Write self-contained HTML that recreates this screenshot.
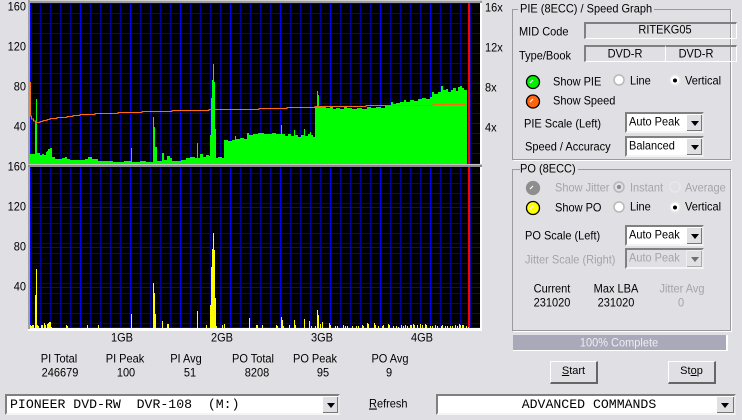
<!DOCTYPE html>
<html><head><meta charset="utf-8"><style>
html,body{margin:0;padding:0;width:742px;height:420px;overflow:hidden;background:#e0dfe3}
body{position:relative;font-family:"Liberation Sans",sans-serif;font-size:11px;color:#000}
svg{position:absolute;left:0;top:0}
.t{position:absolute;line-height:14px;white-space:nowrap;transform:scaleY(1.12)}
.c{transform:translateX(-50%) scaleY(1.12)}
.d{color:#a5a4a8}
.in{position:absolute;box-sizing:border-box;border:1px solid #fff;border-top-color:#808080;border-left-color:#808080;border-top-width:2px;border-left-width:2px;border-right-width:1px}
.cb{position:absolute;box-sizing:border-box;background:#fff;border:2px solid #808080;border-right-color:#e8e8e8;border-bottom-color:#f4f4f4}
.ar{position:absolute;right:0;top:0;bottom:0;width:16px;background:#e0dfe3;border-left:1px solid #fff;border-top:1px solid #fff;box-sizing:border-box;box-shadow:inset -1px -1px 0 #777}
.ar:after{content:"";position:absolute;left:4px;top:6px;border:4px solid transparent;border-top:5px solid #000;border-bottom:0}
.btn{position:absolute;box-sizing:border-box;width:48px;height:23px;background:#e0dfe3;border:1px solid #fff;border-right:2px solid #666;border-bottom:2px solid #666;text-align:center;line-height:19px}
.m{font-family:"Liberation Mono",monospace;font-size:13.2px;transform:none}
.m.c{transform:translateX(-50%)}
</style></head><body>
<svg width="742" height="420" viewBox="0 0 742 420" shape-rendering="crispEdges">
<defs><pattern id="g" x="30" y="3" width="10" height="10" patternUnits="userSpaceOnUse"><rect width="10" height="10" fill="#000"/><rect width="1" height="10" fill="#0000a8"/><rect width="10" height="1" fill="#0000a8"/></pattern></defs>
<rect x="28" y="0" width="454" height="331" fill="#fff"/>
<rect x="30" y="3" width="450" height="161" fill="url(#g)"/>
<rect x="30" y="167" width="450" height="161" fill="url(#g)"/>
<path d="M30.5 3V164M80.5 3V164M130.5 3V164M180.5 3V164M230.5 3V164M280.5 3V164M330.5 3V164M380.5 3V164M430.5 3V164M30.5 167V328M80.5 167V328M130.5 167V328M180.5 167V328M230.5 167V328M280.5 167V328M330.5 167V328M380.5 167V328M430.5 167V328" stroke="#0000f8" stroke-width="1" fill="none"/>
<path d="M30 43.5H480M30 83.5H480M30 123.5H480M30 207.5H480M30 247.5H480M30 287.5H480M30 327.5H480" stroke="#0000d0" stroke-width="1" fill="none"/>
<rect x="28" y="0" width="454" height="1" fill="#d0d0d0"/><rect x="28" y="1" width="454" height="2" fill="#9c9c9c"/>
<rect x="28" y="0" width="2" height="329" fill="#a0a0a0"/>
<path fill="#00ff00" d="M30 164V154H35V122H36V99H37V153H40V155H42V154H44V155H46V152H47V151H48V149H50V148H52V157H55V159H62V158H65V157H67V159H70V160H85V159H88V157H92V159H98V161H113V162H124V161H131V148H132V162H140V161H146V162H153V117H154V127H155V147H157V161H162V153H164V160H167V156H170V158H172V161H181V160H186V158H190V157H195V158H197V143H198V158H200V154H203V157H206V155H209V156H210V135H211V98H212V80H213V64H214V82H215V129H216V158H218V157H222V158H224V140H228V141H232V140H235V136H236V139H240V138H244V139H247V133H249V135H253V134H258V133H264V134H272V133H276V134H281V125H282V134H285V136H288V134H291V136H294V130H295V135H298V137H301V135H304V129H305V136H308V134H310V132H311V135H313V137H315V107H317V91H318V95H319V106H322V107H326V108H330V107H333V109H336V108H340V109H344V107H347V108H352V109H357V108H362V109H367V107H371V108H376V107H381V108H385V106H388V105H391V102H393V104H396V103H400V102H404V100H406V102H410V100H414V101H418V99H422V98H426V99H430V97H432V92H434V94H438V92H441V86H443V90H446V89H448V92H451V90H453V88H456V91H458V87H460V86H462V88H464V90H467V164Z"/>
<path fill="none" stroke="#ff6a10" stroke-width="1" d="M30.5 82V116H31.5V119H33.5V121H35.5V122.5H40V121.5H43V120.5H47V119.5H50V118.5H57V117.500H67V116.500H73V115.500H80V114.500H95V113.500H118V112.500H142V111.500H172V110.500H209V109.500H259V108.500H287V107.500H315V106.500H366V105.500H433V104.500H466"/>
<path fill="none" stroke="#ff0000" stroke-width="2" d="M469 3V164M469 167V328"/>
<path fill="none" stroke="#ffff00" stroke-width="1" d="M30.5 328V325M31.5 328V326M32.5 328V325M33.5 328V325M35.5 328V295M36.5 328V269M37.5 328V325M38.5 328V326M41.5 328V325M42.5 328V325M44.5 328V323M45.5 328V325M47.5 328V324M48.5 328V323M49.5 328V322M50.5 328V322M51.5 328V327M66.5 328V325M67.5 328V326M87.5 328V325M98.5 328V325M131.5 328V314M153.5 328V283M154.5 328V293M155.5 328V314M162.5 328V321M167.5 328V324M168.5 328V324M197.5 328V311M206.5 328V325M210.5 328V305M211.5 328V267M212.5 328V249M213.5 328V233M214.5 328V250M215.5 328V298M216.5 328V326M222.5 328V325M224.5 328V324M249.5 328V318M256.5 328V325M257.5 328V325M262.5 328V325M276.5 328V325M277.5 328V326M281.5 328V317M282.5 328V320M283.5 328V326M289.5 328V325M294.5 328V320M295.5 328V325M304.5 328V319M309.5 328V321M311.5 328V326M315.5 328V326M317.5 328V310M318.5 328V315M320.5 328V324M322.5 328V322M329.5 328V323M330.5 328V325M335.5 328V326M337.5 328V326M343.5 328V325M345.5 328V326M347.5 328V326M352.5 328V326M356.5 328V326M358.5 328V326M362.5 328V325M363.5 328V326M367.5 328V323M368.5 328V324M374.5 328V323M375.5 328V325M378.5 328V326M382.5 328V326M383.5 328V325M388.5 328V324M389.5 328V325M393.5 328V326M396.5 328V326M398.5 328V327M401.5 328V325M403.5 328V326M405.5 328V325M407.5 328V326M410.5 328V325M411.5 328V325M413.5 328V324M414.5 328V325M417.5 328V325M420.5 328V324M422.5 328V325M425.5 328V324M426.5 328V325M430.5 328V326M432.5 328V326M435.5 328V325M437.5 328V326M441.5 328V326M442.5 328V325M445.5 328V326M447.5 328V326M450.5 328V326M452.5 328V326M455.5 328V325M457.5 328V326M459.5 328V324M460.5 328V325M462.5 328V325M463.5 328V325M466.5 328V326M468.5 328V327"/>
<rect x="28" y="164" width="454" height="1" fill="#c4c4c4"/><rect x="28" y="165" width="454" height="2" fill="#8c8c8c"/>
<path fill="none" stroke="#9a9a9e" d="M518 9.5H512.5V159.5H730.5V9.5H647M521 169.5H512.5V330.5H730.5V169.5H574"/>
<path fill="none" stroke="#fff" d="M513.5 160.5H731.5V10M513.5 331.5H731.5V170"/>
<rect x="513" y="335" width="215" height="16" fill="#fff"/><rect x="513" y="335" width="213" height="15" fill="#a9a9b9"/>
<g shape-rendering="auto">
<circle cx="533" cy="82" r="6.5" fill="#00f000" stroke="#000" stroke-width="1.3"/><path d="M530 83L533 80" stroke="#fff" stroke-width="1.2"/>
<circle cx="533" cy="101.500" r="6.500" fill="#ff6410" stroke="#000" stroke-width="1.300"/><path d="M530 102L533 99" stroke="#fff" stroke-width="1.2"/>
<circle cx="533" cy="188" r="6.500" fill="#8e8e8e" stroke="#8e8e8e" stroke-width="1.300"/><path d="M530 189L533 186" stroke="#fff" stroke-width="1.2"/>
<circle cx="533" cy="208" r="6.500" fill="#ffff00" stroke="#000" stroke-width="1.300"/><path d="M530 209L533 206" stroke="#fff" stroke-width="1.2"/>
<circle cx="619" cy="80" r="5" fill="#fff" stroke="#b8b8b8" stroke-width="1.500"/>
<circle cx="675" cy="80" r="5" fill="#fff" stroke="#e8e8e8" stroke-width="1.500"/><circle cx="675" cy="80.500" r="2" fill="#000"/>
<circle cx="619" cy="187" r="5" fill="#e0dfe3" stroke="#b8b8b8" stroke-width="1.500"/><circle cx="619" cy="187" r="2" fill="#888"/>
<circle cx="675" cy="187" r="5" fill="#e0dfe3" stroke="#e8e8ea" stroke-width="1.500"/>
<circle cx="619" cy="207" r="5" fill="#fff" stroke="#b8b8b8" stroke-width="1.500"/>
<circle cx="675" cy="207" r="5" fill="#fff" stroke="#e8e8e8" stroke-width="1.500"/><circle cx="675" cy="207.500" r="2" fill="#000"/>
</g>
</svg>

<span class="t" style="right:716px;top:0">160</span><span class="t" style="right:716px;top:40px">120</span><span class="t" style="right:716px;top:80px">80</span><span class="t" style="right:716px;top:120px">40</span>
<span class="t" style="right:716px;top:160px">160</span><span class="t" style="right:716px;top:200px">120</span><span class="t" style="right:716px;top:240px">80</span><span class="t" style="right:716px;top:280px">40</span>
<span class="t" style="left:485px;top:1px">16x</span><span class="t" style="left:485px;top:41px">12x</span><span class="t" style="left:485px;top:81px">8x</span><span class="t" style="left:485px;top:121px">4x</span>

<span class="t c" style="left:122px;top:331px">1GB</span><span class="t c" style="left:222px;top:331px">2GB</span><span class="t c" style="left:322px;top:331px">3GB</span><span class="t c" style="left:422px;top:331px">4GB</span>
<span class="t c" style="left:59px;top:352px">PI Total</span><span class="t c" style="left:125px;top:352px">PI Peak</span><span class="t c" style="left:186px;top:352px">PI Avg</span><span class="t c" style="left:253px;top:352px">PO Total</span><span class="t c" style="left:315px;top:352px">PO Peak</span><span class="t c" style="left:390px;top:352px">PO Avg</span>
<span class="t c" style="left:60px;top:366px">246679</span><span class="t c" style="left:126px;top:366px">100</span><span class="t c" style="left:190px;top:366px">51</span><span class="t c" style="left:257px;top:366px">8208</span><span class="t c" style="left:323px;top:366px">95</span><span class="t c" style="left:389px;top:366px">9</span>

<span class="t" style="left:520px;top:2px;background:#e0dfe3;padding-right:2px">PIE (8ECC) / Speed Graph</span>
<span class="t" style="left:519px;top:25px">MID Code</span>
<div class="in" style="left:584px;top:22px;width:153px;height:17px"></div>
<span class="t c" style="left:665px;top:23px">RITEKG05</span>
<span class="t" style="left:519px;top:49px">Type/Book</span>
<div class="in" style="left:584px;top:45px;width:82px;height:17px"></div>
<div class="in" style="left:665px;top:45px;width:72px;height:17px;border-left:1px solid #fff"></div>
<span class="t c" style="left:625px;top:47px">DVD-R</span><span class="t c" style="left:696px;top:47px">DVD-R</span>
<span class="t" style="left:553px;top:75px">Show PIE</span><span class="t" style="left:553px;top:94px">Show Speed</span>
<span class="t" style="left:630px;top:74px">Line</span><span class="t" style="left:685px;top:74px">Vertical</span>
<span class="t" style="left:524px;top:117px">PIE Scale (Left)</span>
<div class="cb" style="left:625px;top:112px;width:79px;height:21px"><span class="t" style="left:2px;top:1px">Auto Peak</span><div class="ar"></div></div>
<span class="t" style="left:525px;top:140px">Speed / Accuracy</span>
<div class="cb" style="left:625px;top:136px;width:79px;height:21px"><span class="t" style="left:2px;top:1px">Balanced</span><div class="ar"></div></div>

<span class="t" style="left:520px;top:162px;background:#e0dfe3;padding-right:2px">PO (8ECC)</span>
<span class="t d" style="left:555px;top:181px">Show Jitter</span><span class="t d" style="left:630px;top:181px">Instant</span><span class="t d" style="left:685px;top:181px">Average</span>
<span class="t" style="left:555px;top:201px">Show PO</span><span class="t" style="left:630px;top:200px">Line</span><span class="t" style="left:685px;top:200px">Vertical</span>
<span class="t" style="left:525px;top:229px">PO Scale (Left)</span>
<div class="cb" style="left:625px;top:225px;width:79px;height:21px"><span class="t" style="left:2px;top:1px">Auto Peak</span><div class="ar"></div></div>
<span class="t d" style="left:525px;top:253px">Jitter Scale (Right)</span>
<div class="cb" style="left:625px;top:248px;width:79px;height:21px;background:#e0dfe3"><span class="t d" style="left:2px;top:1px">Auto Peak</span><div class="ar" style="opacity:.5"></div></div>
<span class="t c" style="left:552px;top:282px">Current</span><span class="t c" style="left:616px;top:282px">Max LBA</span><span class="t c d" style="left:682px;top:282px">Jitter Avg</span>
<span class="t c" style="left:552px;top:296px">231020</span><span class="t c" style="left:616px;top:296px">231020</span><span class="t c d" style="left:681px;top:296px">0</span>

<span class="t c" style="left:619px;top:336px;color:#eeeef2">100% Complete</span>
<div class="btn" style="left:550px;top:361px"><u>S</u>tart</div>
<div class="btn" style="left:668px;top:361px">St<u>o</u>p</div>

<div class="cb" style="left:5px;top:394px;width:335px;height:21px"><span class="t m" style="left:3px;top:2px;white-space:pre">PIONEER DVD-RW  DVR-108  (M:)</span><div class="ar"></div></div>
<span class="t" style="left:369px;top:397px"><u>R</u>efresh</span>
<div class="cb" style="left:436px;top:394px;width:300px;height:21px"><span class="t m c" style="left:151px;top:2px;white-space:pre">ADVANCED COMMANDS</span><div class="ar" style="width:18px"></div></div>
</body></html>
